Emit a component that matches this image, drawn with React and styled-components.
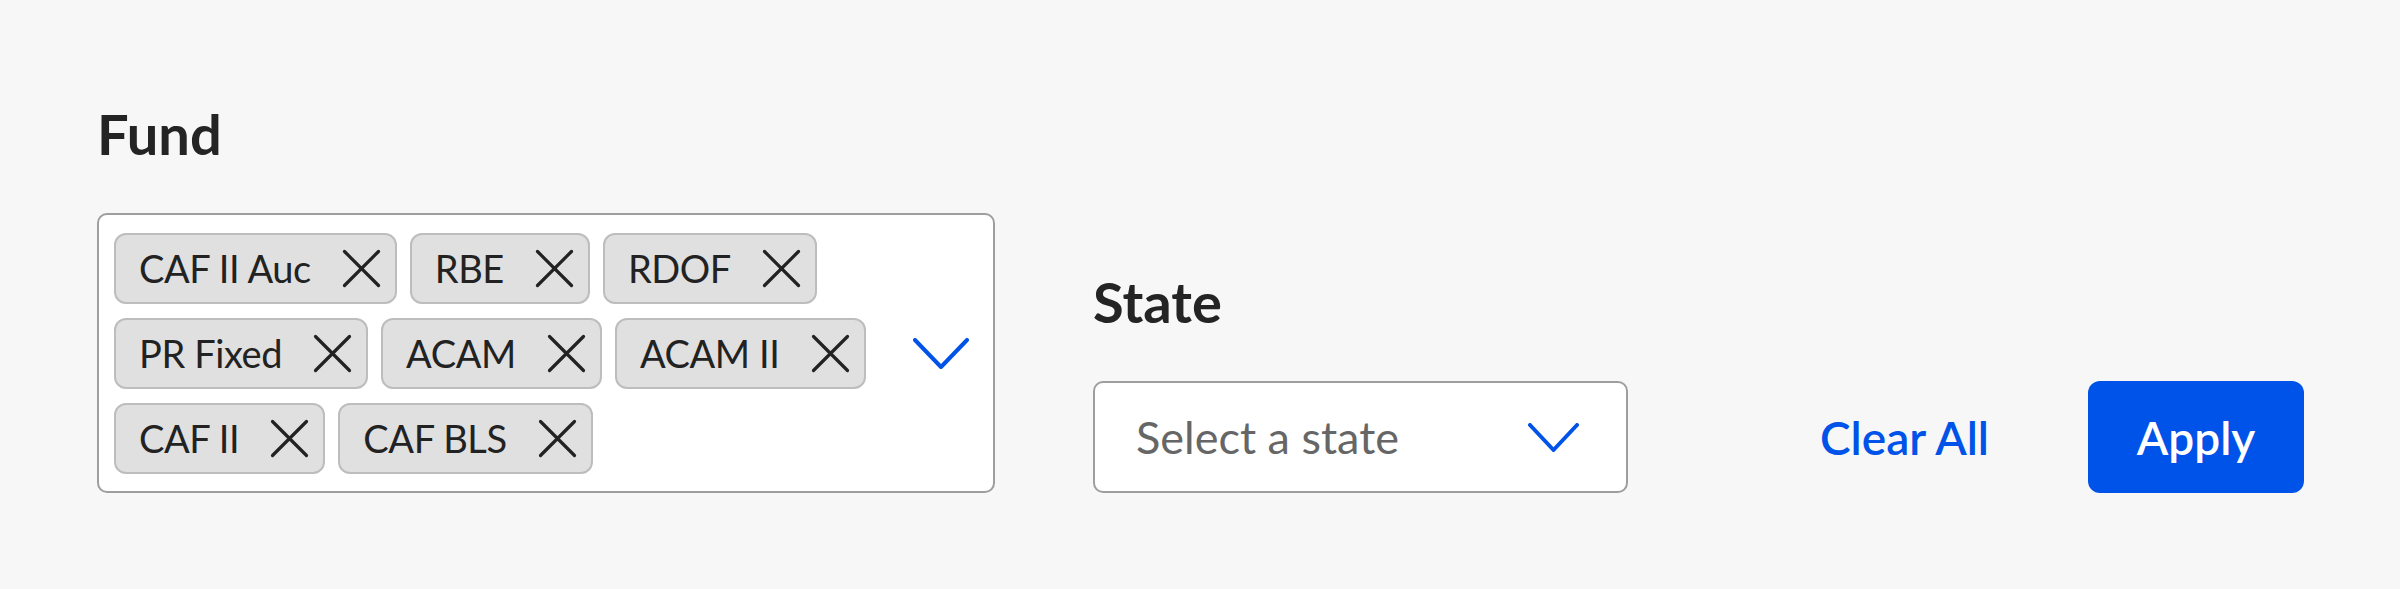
import React from "react";
import styled, { createGlobalStyle } from "styled-components";

const GlobalStyle = createGlobalStyle`
  html, body {
    margin: 0;
    padding: 0;
    background: #f7f7f7;
  }
  body {
    font-family: Lato, "Liberation Sans", sans-serif;
    color: #222222;
  }
`;

const BLUE = "#0053e8";

const funds = ["CAF II Auc", "RBE", "RDOF", "PR Fixed", "ACAM", "ACAM II", "CAF II", "CAF BLS"];

function CloseIcon() {
  return (
    <svg width="39" height="39" viewBox="0 0 39 39" fill="none">
      <path d="M2.5 2.5 L36.5 36.5 M36.5 2.5 L2.5 36.5" stroke="#222" strokeWidth="3.2" strokeLinecap="round" />
    </svg>
  );
}

function Chevron({ width, height }) {
  return (
    <svg width={width} height={height} viewBox={`0 0 ${width} ${height}`} fill="none">
      <path
        d={`M2 2 L${width / 2} ${height - 2} L${width - 2} 2`}
        stroke={BLUE}
        strokeWidth="4"
        strokeLinecap="round"
        strokeLinejoin="round"
      />
    </svg>
  );
}

export default function App() {
  return (
    <>
      <GlobalStyle />
      <Page>
        <Field>
          <Label>Fund</Label>
          <MultiBox>
            <Chips>
              {funds.map((f) => (
                <Chip key={f}>
                  <span>{f}</span>
                  <Remove aria-label={"Remove " + f}>
                    <CloseIcon />
                  </Remove>
                </Chip>
              ))}
            </Chips>
            <ToggleArea>
              <Chevron width={56} height={31} />
            </ToggleArea>
          </MultiBox>
        </Field>

        <Field $gap={98}>
          <Label>State</Label>
          <SelectBox>
            <Placeholder>Select a state</Placeholder>
            <Chevron width={51} height={29} />
          </SelectBox>
        </Field>

        <Actions>
          <ClearButton>Clear All</ClearButton>
          <ApplyButton>Apply</ApplyButton>
        </Actions>
      </Page>
    </>
  );
}

const Page = styled.div`
  display: flex;
  align-items: flex-end;
  box-sizing: border-box;
  min-height: 589px;
  padding: 100px 96px 96px 97px;
`;

const Field = styled.div`
  display: flex;
  flex-direction: column;
  flex-shrink: 0;
  margin-left: ${(p) => (p.$gap ? p.$gap + "px" : "0")};
`;

const Label = styled.div`
  font-size: 56px;
  line-height: 67px;
  font-weight: 700;
  color: #242424;
  margin-bottom: 46px;
`;

const MultiBox = styled.div`
  display: flex;
  align-items: center;
  box-sizing: border-box;
  width: 898px;
  height: 280px;
  background: #ffffff;
  border: 2px solid #9e9e9e;
  border-radius: 10px;
  padding: 18px 0 18px 15px;
`;

const Chips = styled.div`
  display: flex;
  flex-wrap: wrap;
  align-content: flex-start;
  gap: 14px 13px;
  width: 790px;
`;

const Chip = styled.div`
  display: inline-flex;
  align-items: center;
  box-sizing: border-box;
  height: 71px;
  padding: 0 14px 0 23px;
  background: #e0e0e0;
  border: 2px solid #bdbdbd;
  border-radius: 12px;
  font-size: 38px;
  letter-spacing: -0.4px;
  color: #222222;
  white-space: nowrap;

  span {
    margin-right: 31px;
  }
`;

const Remove = styled.button`
  display: flex;
  padding: 0;
  border: none;
  background: none;
`;

const ToggleArea = styled.div`
  flex: 1;
  display: flex;
  justify-content: flex-end;
  padding-right: 24px;
`;

const SelectBox = styled.div`
  display: flex;
  align-items: center;
  justify-content: space-between;
  box-sizing: border-box;
  width: 535px;
  height: 112px;
  background: #ffffff;
  border: 2px solid #9e9e9e;
  border-radius: 10px;
  padding: 0 47px 0 41px;
`;

const Placeholder = styled.span`
  font-size: 45px;
  color: #666666;
`;

const Actions = styled.div`
  margin-left: auto;
  display: flex;
  align-items: center;
  height: 112px;
`;

const ClearButton = styled.button`
  background: none;
  border: none;
  padding: 0;
  margin-right: 99px;
  font-family: inherit;
  font-size: 46px;
  font-weight: 600;
  color: ${BLUE};
`;

const ApplyButton = styled.button`
  width: 216px;
  height: 112px;
  border: none;
  border-radius: 12px;
  background: ${BLUE};
  color: #ffffff;
  font-family: inherit;
  font-size: 46px;
  font-weight: 600;
`;
